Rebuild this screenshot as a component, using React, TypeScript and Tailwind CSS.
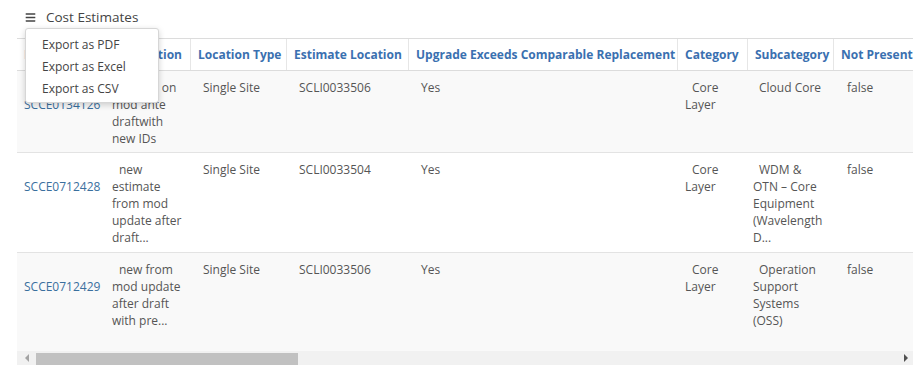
import { FaBars } from "react-icons/fa";

const cols = "grid-cols-[88px_85px_96px_122px_269px_70px_86px_120px]";

const headers = [
  "Estimate ID",
  "Description",
  "Location Type",
  "Estimate Location",
  "Upgrade Exceeds Comparable Replacement",
  "Category",
  "Subcategory",
  "Not Present",
];

type Row = {
  id: string;
  desc: string[];
  locType: string;
  loc: string;
  upgrade: string;
  sub: string[];
  notPresent: string;
  height: string;
  bg: string;
};

const rows: Row[] = [
  {
    id: "SCCE0134126",
    desc: ["update on", "mod ante", "draftwith", "new IDs"],
    locType: "Single Site",
    loc: "SCLI0033506",
    upgrade: "Yes",
    sub: ["Cloud Core"],
    notPresent: "false",
    height: "h-[82px]",
    bg: "bg-[#f9f9f9] border-b border-[#e3e3e3]",
  },
  {
    id: "SCCE0712428",
    desc: ["new", "estimate", "from mod", "update after", "draft..."],
    locType: "Single Site",
    loc: "SCLI0033504",
    upgrade: "Yes",
    sub: ["WDM &", "OTN – Core", "Equipment", "(Wavelength", "D..."],
    notPresent: "false",
    height: "h-[100px]",
    bg: "bg-white border-b border-[#e3e3e3]",
  },
  {
    id: "SCCE0712429",
    desc: ["new from", "mod update", "after draft", "with pre..."],
    locType: "Single Site",
    loc: "SCLI0033506",
    upgrade: "Yes",
    sub: ["Operation", "Support", "Systems", "(OSS)"],
    notPresent: "false",
    height: "h-[98px]",
    bg: "bg-[#f9f9f9]",
  },
];

function Lines({ lines, first }: { lines: string[]; first: string }) {
  return (
    <>
      {lines.map((l, i) => (
        <div key={i} className={i === 0 ? first : ""}>
          {l}
        </div>
      ))}
    </>
  );
}

export default function App() {
  return (
    <div
      className="relative w-[921px] h-[365px] overflow-hidden bg-white text-[12px] text-[#555]"
      style={{ fontFamily: '"Open Sans", "Liberation Sans", sans-serif' }}
    >
      {/* title */}
      <div className="h-[38px] pl-[25px] pt-[8px]">
        <div className="flex items-center h-[18px] gap-[10px] text-[#444]">
          <FaBars size={11} />
          <span className="text-[13.5px]">Cost Estimates</span>
        </div>
      </div>

      {/* table */}
      <div className="ml-[17px] w-[896px] overflow-hidden">
        <div className={`grid ${cols} w-max h-[33px] border-y border-[#dcdcdc] bg-white`}>
          {headers.map((h, i) => (
            <div
              key={h}
              className={`flex items-center px-[7px] font-bold text-[#3a70b0] whitespace-nowrap ${
                i > 0 ? "border-l border-[#e6e6e6]" : ""
              }`}
            >
              {h}
            </div>
          ))}
        </div>

        {rows.map((r) => (
          <div
            key={r.id}
            className={`grid ${cols} w-max leading-[17px] ${r.height} ${r.bg}`}
          >
            <div className="pl-[7px] pt-[25px] text-[#3a6f9e]">{r.id}</div>
            <div className="pl-[7px] pt-[8px] whitespace-nowrap">
              <Lines lines={r.desc} first="indent-[7px]" />
            </div>
            <div className="pl-[13px] pt-[8px]">{r.locType}</div>
            <div className="pl-[13px] pt-[8px]">{r.loc}</div>
            <div className="pl-[13px] pt-[8px]">{r.upgrade}</div>
            <div className="pl-[8px] pt-[8px]">
              <Lines lines={["Core", "Layer"]} first="indent-[7px]" />
            </div>
            <div className="pl-[6px] pt-[8px] whitespace-nowrap">
              <Lines lines={r.sub} first="indent-[6px]" />
            </div>
            <div className="pl-[14px] pt-[8px]">{r.notPresent}</div>
          </div>
        ))}

        {/* horizontal scrollbar */}
        <div className="flex h-[14px] bg-[#f1f1f1]">
          <div className="w-[19px] flex items-center justify-center pb-[1px]">
            <div className="w-0 h-0 border-y-[4px] border-y-transparent border-r-[4px] border-r-[#a3a3a3]" />
          </div>
          <div className="w-[262px] mt-[2px] bg-[#c1c1c1]" />
          <div className="flex-1 flex items-center justify-end pr-[5px] pb-[1px]">
            <div className="w-0 h-0 border-y-[4px] border-y-transparent border-l-[4px] border-l-[#505050]" />
          </div>
        </div>
      </div>

      {/* export menu */}
      <div className="absolute left-[25px] top-[28px] w-[134px] bg-white border border-[#d6d6d6] rounded-[3px] shadow-[0_2px_6px_rgba(0,0,0,0.18)] pt-[5px] pb-[2px] text-[#444]">
        {["Export as PDF", "Export as Excel", "Export as CSV"].map((t) => (
          <div key={t} className="h-[22px] leading-[22px] pl-[16px]">
            {t}
          </div>
        ))}
      </div>
    </div>
  );
}
